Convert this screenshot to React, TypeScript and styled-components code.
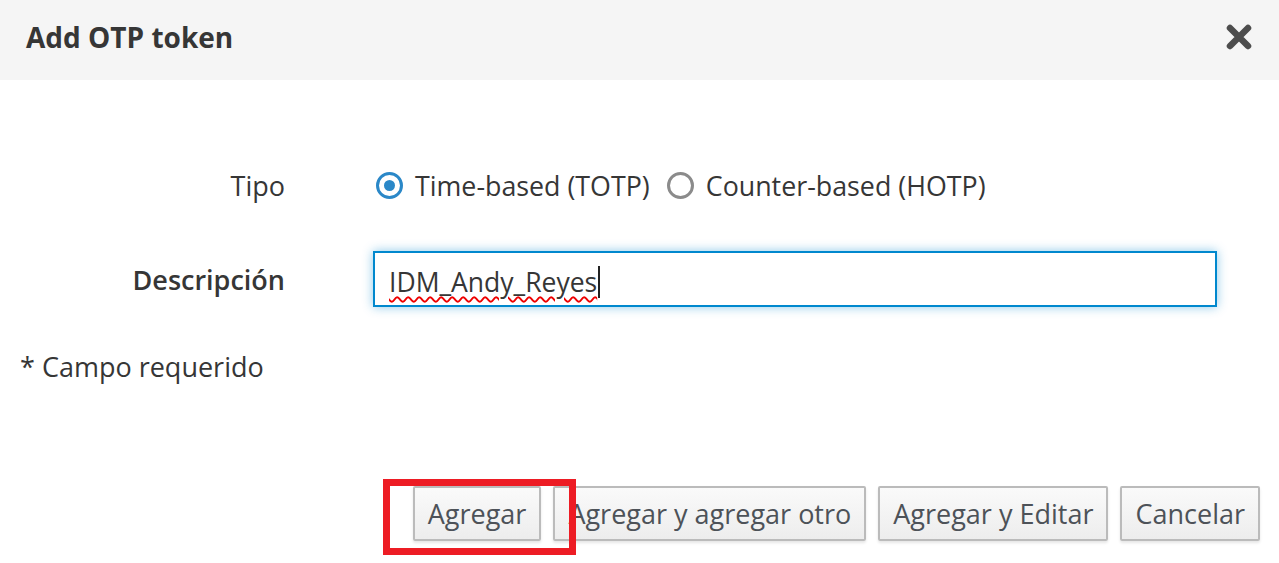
import React from "react";
import styled, { createGlobalStyle } from "styled-components";

const Global = createGlobalStyle`
  html, body { margin: 0; padding: 0; background: #fff; }
  body { font-family: "Open Sans", "Noto Sans", sans-serif; color: #363636; }
  * { box-sizing: border-box; }
`;

const Modal = styled.div`
  position: relative;
  width: 1279px;
  height: 563px;
  background: #fff;
  overflow: hidden;
`;

const Header = styled.div`
  height: 80px;
  background: #f5f5f5;
  display: flex;
  align-items: center;
  justify-content: space-between;
  padding: 0 25px 7px 26px;
`;

const Title = styled.h1`
  margin: 0;
  font-size: 28px;
  font-weight: 700;
  color: #363636;
`;

const Close = styled.button`
  border: 0;
  background: none;
  padding: 0;
  width: 30px;
  height: 30px;
  display: flex;
  align-items: center;
  justify-content: center;
  cursor: pointer;
`;

const Body = styled.div`
  padding: 87px 62px 0 20px;
`;

const FormRow = styled.div<{ $mb: number }>`
  display: grid;
  grid-template-columns: 265px 1fr;
  column-gap: 88px;
  align-items: center;
  margin-bottom: ${(p) => p.$mb}px;
`;

const Label = styled.label<{ $bold?: boolean }>`
  text-align: right;
  font-size: 27px;
  font-weight: ${(p) => (p.$bold ? 600 : 400)};
  color: #363636;
`;

const RadioGroup = styled.div`
  display: flex;
  align-items: center;
  gap: 17px;
  padding-left: 3px;
`;

const RadioOption = styled.span`
  display: inline-flex;
  align-items: center;
  gap: 12px;
  font-size: 26.8px;
  color: #363636;
`;

const RadioCircle = styled.span<{ $checked?: boolean }>`
  width: 27px;
  height: 27px;
  border-radius: 50%;
  border: 3px solid ${(p) => (p.$checked ? "#2b88c8" : "#8b8b8b")};
  display: inline-flex;
  align-items: center;
  justify-content: center;
  &::after {
    content: "";
    width: 11px;
    height: 11px;
    border-radius: 50%;
    background: ${(p) => (p.$checked ? "#2b88c8" : "transparent")};
  }
`;

const Input = styled.div`
  height: 56px;
  border: 2px solid #0088ce;
  box-shadow: 0 0 10px rgba(0, 136, 206, 0.45);
  background: #fff;
  display: flex;
  align-items: center;
  padding: 6px 14px 0;
  font-size: 26.5px;
  color: #363636;
`;

const Misspelled = styled.span`
  text-decoration: underline wavy #e00;
  text-decoration-thickness: 1.5px;
  text-underline-offset: 4px;
`;

const Caret = styled.span`
  display: inline-block;
  width: 2px;
  height: 32px;
  background: #222;
  margin-left: 1px;
`;

const Required = styled.div`
  font-size: 27px;
  color: #363636;
`;

const Footer = styled.div`
  position: absolute;
  right: 19px;
  top: 486px;
  display: flex;
  gap: 12px;
`;

const Button = styled.button`
  height: 55px;
  padding: 0 13px;
  font-family: "Open Sans", "Noto Sans", sans-serif;
  font-size: 27px;
  color: #4d5258;
  background: linear-gradient(#fafafa, #ededed);
  border: 2px solid #bbb;
  border-radius: 2px;
  box-shadow: 0 2px 3px rgba(3, 3, 3, 0.1);
  cursor: pointer;
`;

const Highlight = styled.div`
  position: absolute;
  left: 383px;
  top: 479px;
  width: 193px;
  height: 76px;
  border: 7px solid #ed1c24;
  pointer-events: none;
`;

export default function App() {
  return (
    <Modal>
      <Global />
      <Header>
        <Title>Add OTP token</Title>
        <Close aria-label="Close">
          <svg width="26" height="26" viewBox="0 0 26 26">
            <path d="M4 4 L22 22 M22 4 L4 22" stroke="#4d4d4d" strokeWidth="6.5" strokeLinecap="round" />
          </svg>
        </Close>
      </Header>
      <Body>
        <FormRow $mb={47}>
          <Label>Tipo</Label>
          <RadioGroup>
            <RadioOption>
              <RadioCircle $checked />
              Time-based (TOTP)
            </RadioOption>
            <RadioOption>
              <RadioCircle />
              Counter-based (HOTP)
            </RadioOption>
          </RadioGroup>
        </FormRow>
        <FormRow $mb={41}>
          <Label $bold>Descripción</Label>
          <Input>
            <Misspelled>IDM_Andy_Reyes</Misspelled>
            <Caret />
          </Input>
        </FormRow>
        <Required>* Campo requerido</Required>
      </Body>
      <Footer>
        <Button>Agregar</Button>
        <Button>Agregar y agregar otro</Button>
        <Button>Agregar y Editar</Button>
        <Button>Cancelar</Button>
      </Footer>
      <Highlight />
    </Modal>
  );
}
